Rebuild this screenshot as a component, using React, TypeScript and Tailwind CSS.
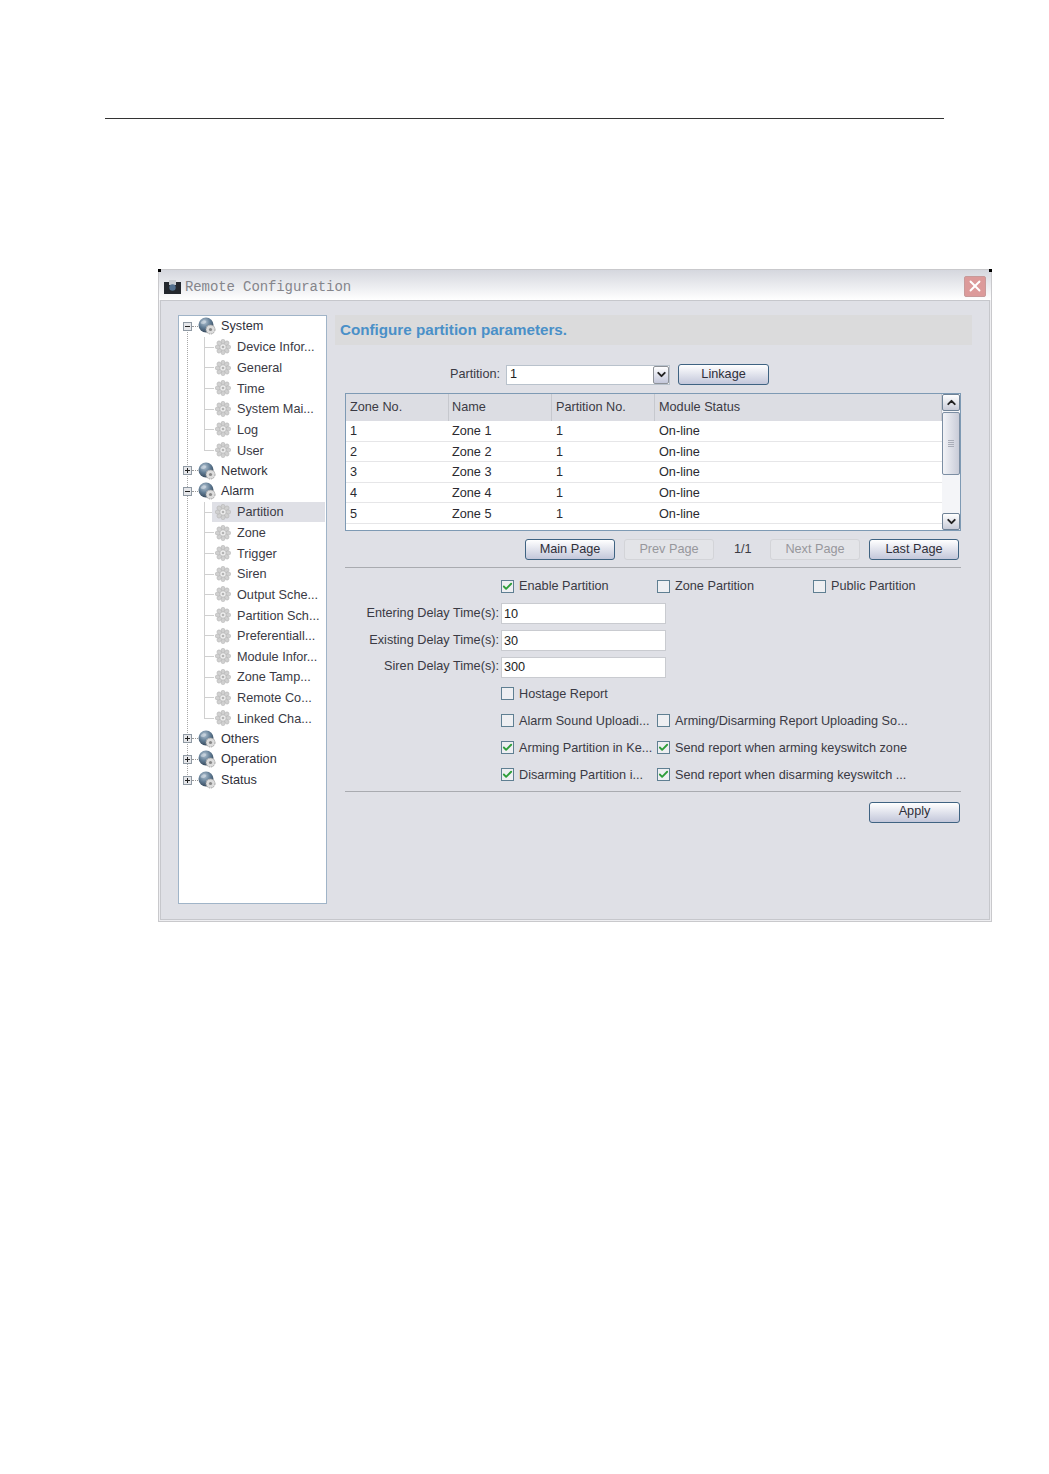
import React from "react";
import { Check, ChevronDown, ChevronUp, X } from "lucide-react";

const sans = "font-['Liberation_Sans',Arial,sans-serif]";

const GlobeIcon = () => (
  <svg width="18" height="18" viewBox="0 0 18 18" className="shrink-0">
    <defs>
      <radialGradient id="globeFill" cx="0.4" cy="0.3" r="0.8">
        <stop offset="0" stopColor="#b4c5d4" />
        <stop offset="0.5" stopColor="#5f7a92" />
        <stop offset="1" stopColor="#2a3a4c" />
      </radialGradient>
    </defs>
    <circle cx="8" cy="8" r="7.5" fill="url(#globeFill)" />
    <path d="M3 5c2-2 4-2 5-1s-1 3-3 3-3-1-2-2zM9 9c2-1 4 0 4 1s-2 3-3 3-2-3-1-4z" fill="#dfe6ec" opacity="0.5" />
    <circle cx="12.5" cy="12.5" r="4.5" fill="#dcdcdc" stroke="#a0a0a0" strokeWidth="1" strokeDasharray="1.6 0.8" />
    <circle cx="12.5" cy="12.5" r="1.6" fill="#8a8a8a" />
  </svg>
);

const GearIcon = () => (
  <svg width="16" height="16" viewBox="0 0 16 16" className="shrink-0">
    {[0, 45, 90, 135, 180, 225, 270, 315].map((a) => (
      <ellipse key={a} cx="8" cy="2.9" rx="2.1" ry="2.7" fill="#d0d0d0" stroke="#b0b0b0" strokeWidth="0.5" transform={`rotate(${a} 8 8)`} />
    ))}
    <circle cx="8" cy="8" r="3.2" fill="#ededed" stroke="#acacac" strokeWidth="0.6" />
    <circle cx="8" cy="8" r="1.3" fill="#b4b4b4" />
  </svg>
);

const Expander = ({ open }: { open: boolean }) => (
  <span className="relative z-10 flex h-[9px] w-[9px] items-center justify-center border border-[#8f99a3] bg-[#e6e7ea]">
    <span className="h-px w-[5px] bg-[#222222]" />
    {!open && <span className="absolute h-[5px] w-px bg-[#222222]" />}
  </span>
);

const RootRow = ({ label, open }: { label: string; open: boolean }) => (
  <div className="flex h-[20.63px] items-center pl-[4px]">
    <Expander open={open} />
    <span className="w-[6px] border-t border-dotted border-[#999999]" />
    <GlobeIcon />
    <span className="ml-[5px] pt-[1px] text-[12.7px] text-[#2f2f3a]">{label}</span>
  </div>
);

const ChildRow = ({ label, selected, last }: { label: string; selected?: boolean; last?: boolean }) => (
  <div className="relative flex h-[20.63px] items-center pl-[36px]">
    <span className={`absolute left-[25px] top-0 w-px bg-[#d0d0d0] ${last ? "h-[10px]" : "h-full"}`} />
    <span className="absolute left-[25px] top-[10px] h-px w-[10px] bg-[#d0d0d0]" />
    {selected && <span className="absolute bottom-0 left-[33px] right-px top-0 bg-[#dfe0e6]" />}
    <span className="relative">
      <GearIcon />
    </span>
    <span className="relative ml-[6px] whitespace-nowrap pt-[2px] text-[12.7px] text-[#3a3a44]">{label}</span>
  </div>
);

const Btn = ({ label, disabled, className }: { label: string; disabled?: boolean; className: string }) => (
  <div
    className={`flex h-[21px] w-[90px] shrink-0 items-center justify-center rounded-[3px] border text-[12.7px] ${
      disabled
        ? "border-[#d3d4d8] bg-[#e3e4e8] text-[#97979c]"
        : "border-[#3f6382] bg-gradient-to-b from-white to-[#c3c7da] text-[#2f2f3a]"
    } ${className}`}
  >
    {label}
  </div>
);

const Box = ({ label, checked, width }: { label: string; checked?: boolean; width: string }) => (
  <div className={`flex shrink-0 items-center ${width}`}>
    <span className="flex h-[13px] w-[13px] shrink-0 items-center justify-center border border-[#5f7f92] bg-[#eeeff2]">
      {checked && <Check size={11} strokeWidth={4} className="text-[#2e9e3a]" />}
    </span>
    <span className="ml-[5px] whitespace-nowrap pt-[2px] text-[12.7px] text-[#3a3a44]">{label}</span>
  </div>
);

const Field = ({ label, value, className }: { label: string; value: string; className: string }) => (
  <div className={`flex h-[21px] items-center ${className}`}>
    <span className="w-[154px] whitespace-nowrap text-right text-[12.7px] text-[#3a3a44]">{label}</span>
    <div className="ml-[2px] flex h-[21px] w-[165px] items-center border border-[#c9cbd0] bg-white pl-[2px] pt-[2px] text-[12.7px] text-[#222222]">
      {value}
    </div>
  </div>
);

const systemItems = ["Device Infor...", "General", "Time", "System Mai...", "Log", "User"];
const alarmItems = [
  "Partition",
  "Zone",
  "Trigger",
  "Siren",
  "Output Sche...",
  "Partition Sch...",
  "Preferentiall...",
  "Module Infor...",
  "Zone Tamp...",
  "Remote Co...",
  "Linked Cha...",
];
const columns = ["Zone No.", "Name", "Partition No.", "Module Status"];
const columnStyles = ["w-[103px] pl-[4px]", "w-[103px] pl-[3px]", "w-[103px] pl-[4px]", "flex-1 pl-[4px]"];

const App = () => {
  return (
    <div className={`min-h-[1474px] bg-white pt-[118px] ${sans}`}>
      <div className="ml-[105px] h-px w-[839px] bg-[#333333]" />

      {/* - Window */}
      <div className="relative ml-[158px] mt-[150px] flex h-[653px] w-[834px] flex-col border border-[#c9c9cc] bg-[#eeeef1]">
        <span className="absolute -left-px -top-px h-[3px] w-[3px] bg-black" />
        <span className="absolute -right-px -top-px h-[3px] w-[3px] bg-black" />

        {/* - Title bar */}
        <div className="flex h-[30px] shrink-0 items-center bg-gradient-to-b from-[#d5d7de] to-white pl-[5px] pr-[5px]">
          <svg width="17" height="14" viewBox="0 0 17 14" className="mt-[3px] shrink-0">
            <rect x="0" y="2" width="17" height="12" fill="#24282e" />
            <rect x="5" y="0" width="7" height="5" fill="#c9cdd2" />
            <circle cx="8.5" cy="7.5" r="3.2" fill="#52708f" />
          </svg>
          <span className="ml-[4px] mt-[3px] font-['Liberation_Mono',monospace] text-[14px] leading-none tracking-[-0.1px] text-[#85858b]">
            Remote Configuration
          </span>
          <div className="ml-auto mt-[2px] flex h-[21px] w-[22px] items-center justify-center rounded-[2px] border border-[#c79a9a] bg-[#dc9a9a]">
            <X size={18} strokeWidth={2.5} className="text-white" />
          </div>
        </div>

        {/* - Body */}
        <div className="mx-[1px] mb-[1px] flex flex-1 border border-[#c6c7cc] bg-[#dfe0e6] pl-[17px] pt-[14px]">
          {/* - Tree */}
          <div className="relative h-[589px] w-[149px] shrink-0 border border-[#a0b4c8] bg-white">
            <span className="absolute bottom-[122px] left-[8px] top-[14px] border-l border-dotted border-[#a8a8a8]" />
            <RootRow label="System" open />
            {systemItems.map((item, i) => (
              <ChildRow key={item} label={item} last={i === systemItems.length - 1} />
            ))}
            <RootRow label="Network" open={false} />
            <RootRow label="Alarm" open />
            {alarmItems.map((item, i) => (
              <ChildRow key={item} label={item} selected={i === 0} last={i === alarmItems.length - 1} />
            ))}
            <RootRow label="Others" open={false} />
            <RootRow label="Operation" open={false} />
            <RootRow label="Status" open={false} />
          </div>

          {/* - Right column */}
          <div className="ml-[8px] w-[637px]">
            <div className="flex h-[30px] items-center bg-[#dbdbdc] pl-[5px] text-[15.2px] font-bold text-[#4a90c8]">
              Configure partition parameters.
            </div>

            <div className="ml-[115px] mt-[19px] flex h-[21px] items-center">
              <span className="text-[12.7px] text-[#3a3a44]">Partition:</span>
              <div className="ml-[6px] flex h-[20px] w-[164px] items-center justify-between border border-[#b9c2cc] bg-white pl-[3px] text-[12.7px] text-[#222222]">
                1
                <span className="flex h-[18px] w-[16px] items-center justify-center rounded-[2px] border border-[#8e9298] bg-gradient-to-b from-white to-[#c3c7da]">
                  <ChevronDown size={13} strokeWidth={3.5} className="text-[#222222]" />
                </span>
              </div>
              <Btn label="Linkage" className="ml-[8px] w-[91px]" />
            </div>

            <div className="ml-[10px] mt-[8px] flex h-[138px] w-[616px] border border-[#7e9ab4] bg-white">
              {/* - Table */}
              <div className="flex-1">
                <div className="flex h-[27px] bg-[#dcdde3] text-[12.7px] text-[#3a3a44]">
                  {columns.map((c, i) => (
                    <div key={c} className={`flex items-center border-r border-[#c6c8ce] ${columnStyles[i]}`}>
                      {c}
                    </div>
                  ))}
                </div>
                {[1, 2, 3, 4, 5].map((n) => (
                  <div key={n} className="flex h-[20.6px] border-b border-[#e6e6e8] pt-[2px] text-[12.7px] text-[#2a2a30]">
                    <div className={`flex items-center ${columnStyles[0]}`}>{n}</div>
                    <div className={`flex items-center ${columnStyles[1]}`}>Zone {n}</div>
                    <div className={`flex items-center ${columnStyles[2]}`}>1</div>
                    <div className={`flex items-center ${columnStyles[3]}`}>On-line</div>
                  </div>
                ))}
              </div>
              {/* - Scrollbar */}
              <div className="flex w-[18px] shrink-0 flex-col bg-[#f4f5f8]">
                <div className="flex h-[17px] items-center justify-center rounded-[2px] border border-[#6f8296] bg-gradient-to-b from-white to-[#c9ccd8]">
                  <ChevronUp size={13} strokeWidth={3.5} className="text-[#222222]" />
                </div>
                <div className="mt-px flex h-[63px] flex-col items-center justify-center gap-px rounded-[2px] border border-[#7c8ea3] bg-gradient-to-r from-[#f2f3f7] to-[#c9ccd8]">
                  <span className="h-px w-[6px] bg-[#a9adb8]" />
                  <span className="h-px w-[6px] bg-[#a9adb8]" />
                  <span className="h-px w-[6px] bg-[#a9adb8]" />
                  <span className="h-px w-[6px] bg-[#a9adb8]" />
                </div>
                <div className="mt-auto flex h-[17px] items-center justify-center rounded-[2px] border border-[#6f8296] bg-gradient-to-b from-white to-[#c9ccd8]">
                  <ChevronDown size={13} strokeWidth={3.5} className="text-[#222222]" />
                </div>
              </div>
            </div>

            {/* - Pager */}
            <div className="ml-[190px] mt-[8px] flex h-[21px] items-center">
              <Btn label="Main Page" className="" />
              <Btn label="Prev Page" disabled className="ml-[9px]" />
              <span className="ml-[20px] w-[16px] text-[12.7px] text-[#3a3a44]">1/1</span>
              <Btn label="Next Page" disabled className="ml-[20px]" />
              <Btn label="Last Page" className="ml-[9px]" />
            </div>

            <div className="ml-[10px] mt-[7px] h-px w-[616px] bg-[#a9abb0]" />

            {/* - Form */}
            <div className="ml-[10px] w-[616px]">
              <div className="mt-[8px] flex h-[20px] pl-[156px]">
                <Box label="Enable Partition" checked width="w-[156px]" />
                <Box label="Zone Partition" width="w-[156px]" />
                <Box label="Public Partition" width="w-[148px]" />
              </div>
              <Field label="Entering Delay Time(s):" value="10" className="mt-[7px]" />
              <Field label="Existing Delay Time(s):" value="30" className="mt-[6px]" />
              <Field label="Siren Delay Time(s):" value="300" className="mt-[5.5px]" />
              <div className="mt-[6px] flex h-[20px] pl-[156px]">
                <Box label="Hostage Report" width="w-[156px]" />
              </div>
              <div className="mt-[7px] flex h-[20px] pl-[156px]">
                <Box label="Alarm Sound Uploadi..." width="w-[156px]" />
                <Box label="Arming/Disarming Report Uploading So..." width="w-[256px]" />
              </div>
              <div className="mt-[7px] flex h-[20px] pl-[156px]">
                <Box label="Arming Partition in Ke..." checked width="w-[156px]" />
                <Box label="Send report when arming keyswitch zone" checked width="w-[256px]" />
              </div>
              <div className="mt-[7px] flex h-[20px] pl-[156px]">
                <Box label="Disarming Partition i..." checked width="w-[156px]" />
                <Box label="Send report when disarming keyswitch ..." checked width="w-[256px]" />
              </div>
              <div className="mt-[6px] h-px w-full bg-[#a9abb0]" />
              <Btn label="Apply" className="ml-[524px] mt-[10px] w-[91px]" />
            </div>
          </div>
        </div>
      </div>
    </div>
  );
};

export default App;
